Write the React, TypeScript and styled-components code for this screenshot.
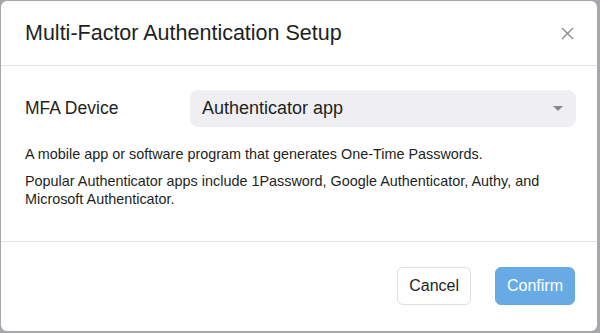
import React from 'react';
import styled, { createGlobalStyle } from 'styled-components';

const GlobalStyle = createGlobalStyle`
  html, body {
    margin: 0;
    padding: 0;
    background: #a6a6ab;
    font-family: 'Liberation Sans', Arial, sans-serif;
  }
`;

const Backdrop = styled.div`
  width: 600px;
  height: 333px;
  box-sizing: border-box;
  padding: 1px 3px 2px 1px;
  display: flex;
`;

const Modal = styled.div`
  flex: 1;
  background: #ffffff;
  border-radius: 6px;
  display: flex;
  flex-direction: column;
  overflow: hidden;
`;

const Header = styled.div`
  display: flex;
  align-items: center;
  justify-content: space-between;
  padding: 20px 22px 20px 24px;
  border-bottom: 1px solid #e2e2e6;
`;

const Title = styled.h2`
  margin: 0;
  font-size: 21.5px;
  line-height: 24px;
  font-weight: 400;
  color: #1d1f22;
`;

const CloseButton = styled.button`
  border: none;
  background: none;
  padding: 0;
  width: 16px;
  height: 16px;
  display: flex;
  align-items: center;
  justify-content: center;
  cursor: pointer;
`;

const Body = styled.div`
  padding: 24px 21px 33px 24px;
  border-bottom: 1px solid #e2e2e6;
`;

const FieldRow = styled.div`
  display: flex;
  align-items: center;
  margin-bottom: 18px;
`;

const Label = styled.label`
  width: 165px;
  font-size: 17.5px;
  color: #1d1f22;
`;

const Select = styled.div`
  flex: 1;
  height: 37px;
  display: flex;
  align-items: center;
  justify-content: space-between;
  padding: 0 13px 0 12px;
  background: #efeff3;
  border-radius: 8px;
  font-size: 18px;
  color: #1d1f22;
`;

const Text = styled.p<{ $gap?: number }>`
  margin: 0 0 ${p => p.$gap ?? 0}px;
  font-size: 14.4px;
  line-height: 18px;
  color: #1d1f22;
`;

const Footer = styled.div`
  display: flex;
  justify-content: flex-end;
  gap: 24px;
  padding: 25px 22px 25px 24px;
`;

const Button = styled.button<{ $primary?: boolean }>`
  height: 38px;
  padding: 0 11px;
  font-family: inherit;
  font-size: 16px;
  border-radius: 6px;
  border: 1px solid ${p => (p.$primary ? '#68abe4' : '#dedee3')};
  background: ${p => (p.$primary ? '#68abe4' : '#ffffff')};
  color: ${p => (p.$primary ? '#ffffff' : '#1d1f22')};
`;

export default function App() {
  return (
    <>
      <GlobalStyle />
      <Backdrop>
        <Modal>
          <Header>
            <Title>Multi-Factor Authentication Setup</Title>
            <CloseButton aria-label="Close">
              <svg width="13" height="13" viewBox="0 0 13 13">
                <path d="M1 1L12 12M12 1L1 12" stroke="#8a8a90" strokeWidth="1.4" />
              </svg>
            </CloseButton>
          </Header>
          <Body>
            <FieldRow>
              <Label>MFA Device</Label>
              <Select>
                Authenticator app
                <svg width="10" height="5" viewBox="0 0 10 5">
                  <path d="M0 0H10L5 5Z" fill="#85858b" />
                </svg>
              </Select>
            </FieldRow>
            <Text $gap={9}>A mobile app or software program that generates One-Time Passwords.</Text>
            <Text>
              Popular Authenticator apps include 1Password, Google Authenticator, Authy, and
              Microsoft Authenticator.
            </Text>
          </Body>
          <Footer>
            <Button>Cancel</Button>
            <Button $primary>Confirm</Button>
          </Footer>
        </Modal>
      </Backdrop>
    </>
  );
}
